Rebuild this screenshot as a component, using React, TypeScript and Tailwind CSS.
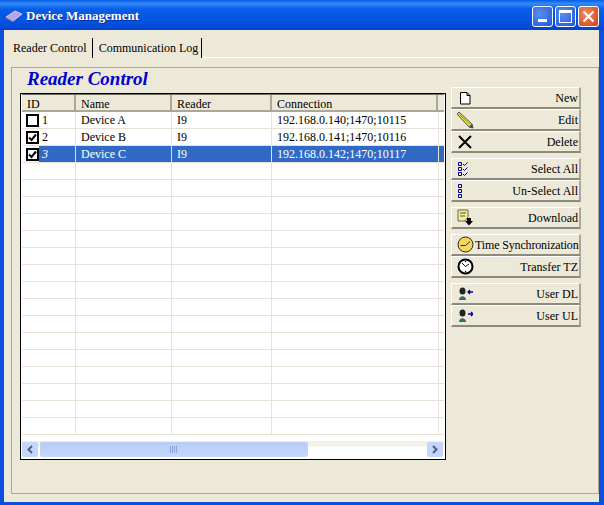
const F = "font-['Liberation_Serif',serif]";

const rows: { id: string; name: string; reader: string; conn: string; checked: boolean; sel?: boolean }[] = [
  { id: "1", name: "Device A", reader: "I9", conn: "192.168.0.140;1470;10115", checked: false },
  { id: "2", name: "Device B", reader: "I9", conn: "192.168.0.141;1470;10116", checked: true },
  { id: "3", name: "Device C", reader: "I9", conn: "192.168.0.142;1470;10117", checked: true, sel: true },
];

function Check({ on }: { on: boolean }) {
  return (
    <span className="flex h-[13px] w-[13px] shrink-0 items-center justify-center border-2 border-black bg-white">
      {on && (
        <svg width="9" height="9" viewBox="0 0 9 9">
          <path d="M1 4.5 L3.5 7 L8 1.5" fill="none" stroke="#000" strokeWidth="2" />
        </svg>
      )}
    </span>
  );
}

const icons: Record<string, React.ReactNode> = {
  new: (
    <svg width="14" height="14" viewBox="0 0 14 14">
      <path d="M2.5 1.5 H9 L12 4.5 V13 H2.5 Z M9 1.5 V4.5 H12" fill="#fff" stroke="#000" />
    </svg>
  ),
  edit: (
    <svg width="18" height="18" viewBox="0 0 18 18">
      <path d="M1 3 L3 1 L16 13 L17 17 L13 16 Z" fill="#e8e04a" stroke="#555" />
      <path d="M3 3 L14.5 14" stroke="#99912a" fill="none" />
      <path d="M13 16 L16 13 L17 17 Z" fill="#444" />
    </svg>
  ),
  del: (
    <svg width="14" height="14" viewBox="0 0 14 14">
      <path d="M1 1 L13 13 M13 1 L1 13" stroke="#000" strokeWidth="2" />
    </svg>
  ),
  all: (
    <svg width="10" height="14" viewBox="0 0 10 14">
      <path d="M.5 .5h3v3h-3zM.5 5.5h3v3h-3zM.5 10.5h3v3h-3z" fill="none" stroke="#000090" />
      <path d="M5 2 L6.5 3.5 L9.5 .5 M5 7 L6.5 8.5 L9.5 5.5 M5 12 L6.5 13.5 L9.5 10.5" fill="none" stroke="#000090" />
    </svg>
  ),
  none: (
    <svg width="5" height="14" viewBox="0 0 5 14">
      <path d="M.5 .5h3v3h-3zM.5 5.5h3v3h-3zM.5 10.5h3v3h-3z" fill="none" stroke="#000090" />
    </svg>
  ),
  dl: (
    <svg width="17" height="17" viewBox="0 0 17 17">
      <path d="M1 1 H11 V8 L8 12 H1 Z" fill="#f6ee8a" stroke="#666" />
      <path d="M3 4 H9 M3 7 H8" stroke="#555" />
      <path d="M10 9 H14 V12 H16 L12 16.5 L8 12 H10 Z" fill="#000" />
    </svg>
  ),
  time: (
    <svg width="17" height="17" viewBox="0 0 17 17">
      <circle cx="8.5" cy="8.5" r="7.5" fill="#f5d65a" stroke="#222" />
      <path d="M8.5 9.5 L13 5.5 M8.5 9.5 H3.5" stroke="#333" fill="none" />
    </svg>
  ),
  tz: (
    <svg width="17" height="17" viewBox="0 0 17 17">
      <circle cx="8.5" cy="8.5" r="7" fill="#fff" stroke="#000" strokeWidth="2" />
      <path d="M8.5 8.5 L5 5 M8.5 8.5 L12 6" stroke="#000" fill="none" />
      <circle cx="8.5" cy="3.5" r=".7" fill="#000" />
      <circle cx="8.5" cy="13.5" r=".7" fill="#000" />
    </svg>
  ),
  udl: (
    <svg width="15" height="13" viewBox="0 0 15 13">
      <ellipse cx="4.5" cy="4" rx="3" ry="3.5" fill="#222" />
      <path d="M1 13 C1 8 8 8 8 13 Z" fill="#2f6f6a" />
      <path d="M10 5 H15 M12 3 L10 5 L12 7" stroke="#0000a0" strokeWidth="1.3" fill="none" />
    </svg>
  ),
  uul: (
    <svg width="15" height="13" viewBox="0 0 15 13">
      <ellipse cx="4.5" cy="4" rx="3" ry="3.5" fill="#222" />
      <path d="M1 13 C1 8 8 8 8 13 Z" fill="#2f6f6a" />
      <path d="M10 5 H15 M13 3 L15 5 L13 7" stroke="#0000a0" strokeWidth="1.3" fill="none" />
    </svg>
  ),
};

function Btn({ icon, label, left, tight }: { icon: string; label: string; left?: boolean; tight?: boolean }) {
  return (
    <button className="flex h-[22px] w-[130px] items-center justify-between whitespace-nowrap border-t border-l border-t-white border-l-white border-r-2 border-b-2 border-r-[#aca899] border-b-[#8d8a7c] bg-[#ece9d8] pr-[1px] pl-[3px] text-[12px] text-black">
      <span className={`flex w-[20px] shrink-0 items-center ${left ? "justify-start pl-[3px]" : "justify-center"}`}>{icons[icon]}</span>
      <span className={tight ? "tracking-[-0.15px]" : ""}>{label}</span>
    </button>
  );
}

const cellLine = "shrink-0 border-r border-[#e6e3d6] pl-[5px] leading-[17px]";

function Row({ a, b, c, d, sel }: { a?: React.ReactNode; b?: string; c?: string; d?: string; sel?: boolean }) {
  const bg = sel ? "bg-[#316ac5] text-white" : "";
  return (
    <div className="flex h-[17px] w-[422px] border-b border-[#e6e3d6]">
      <div className="flex w-[54px] shrink-0 items-center border-r border-[#e6e3d6] pl-[4px]">{a}</div>
      <div className={`w-[96px] ${cellLine} ${bg}`}>{b}</div>
      <div className={`w-[100px] ${cellLine} ${bg}`}>{c}</div>
      <div className={`w-[167px] ${cellLine} ${bg}`}>{d}</div>
      <div className={`flex-1 ${bg}`} />
    </div>
  );
}

function Head({ w, t }: { w: string; t: string }) {
  return <div className={`${w} flex h-full shrink-0 items-center border-r-2 border-[#aca899] pt-[2px] pl-[5px]`}>{t}</div>;
}

function ScrollBtn({ d }: { d: string }) {
  return (
    <div className="flex h-[15px] w-[16px] shrink-0 items-center justify-center rounded-[2px] bg-[#c5d5fb]">
      <svg width="8" height="9" viewBox="0 0 8 9">
        <path d={d} fill="none" stroke="#4d6185" strokeWidth="2" />
      </svg>
    </div>
  );
}

export default function App() {
  const empty = Array.from({ length: 16 });
  return (
    <div className={`flex h-[505px] w-[604px] flex-col overflow-hidden bg-[#0a4fe0] ${F} text-[12px] text-black`}>
      <div className="flex h-[30px] shrink-0 items-center justify-between bg-[linear-gradient(180deg,#0a5ae8_0%,#2f8cf5_12%,#0a5ce8_30%,#0350e0_80%,#0342c8_100%)] pt-[2px] pr-[5px] pl-[5px]">
        <div className="flex items-center gap-[3px]">
          <svg width="18" height="14" viewBox="0 0 18 14">
            <path d="M1 8 L10 2 L17 5 L8 12 Z" fill="#b4a6e6" stroke="#e6e0fa" strokeWidth=".8" />
            <path d="M1 8 L8 12 V13.5 L1 9.5 Z" fill="#7c70b8" />
          </svg>
          <span className="text-[13px] font-bold text-white [text-shadow:1px_1px_0_#0a2f90]">Device Management</span>
        </div>
        <div className="flex gap-[2px]">
          <div className="flex h-[21px] w-[21px] items-end rounded-[3px] border border-white bg-[radial-gradient(circle_at_35%_35%,#5a90f5,#1f55d8)] pb-[4px] pl-[5px]">
            <div className="h-[3px] w-[9px] bg-white" />
          </div>
          <div className="flex h-[21px] w-[21px] items-center justify-center rounded-[3px] border border-white bg-[radial-gradient(circle_at_35%_35%,#5a90f5,#1f55d8)]">
            <div className="h-[13px] w-[13px] border border-t-[3px] border-white" />
          </div>
          <div className="flex h-[21px] w-[21px] items-center justify-center rounded-[3px] border border-white bg-[radial-gradient(circle_at_35%_35%,#ef8a60,#d0401c)]">
            <svg width="13" height="13" viewBox="0 0 13 13">
              <path d="M1.5 1.5 L11.5 11.5 M11.5 1.5 L1.5 11.5" stroke="#fff" strokeWidth="2.2" />
            </svg>
          </div>
        </div>
      </div>

      <div className="mr-[5px] mb-[3px] ml-[4px] flex flex-1 flex-col bg-[#ece9d8]">
        <div className="flex h-[28px] shrink-0 items-end pl-[9px]">
          <div className="flex h-[20px] items-center pr-[5px]">Reader Control</div>
          <div className="flex h-[20px] items-center border-x border-black pr-[3px] pl-[6px]">Communication Log</div>
          <div className="flex-1 border-b border-white" />
        </div>

        <div className="mt-[9px] mr-0 mb-[8px] ml-[7px] flex flex-1 flex-col border border-[#aca899] pl-[8px]">
          <div className="ml-[7px] h-[24px] text-[19px] leading-[22px] font-bold text-[#0000cc] italic">Reader Control</div>
          <div className="flex flex-1">
            <div className="mt-px flex h-[367px] w-[426px] shrink-0 flex-col overflow-hidden border border-black bg-white pr-px pb-px pl-px">
              <div className="h-px w-full shrink-0 bg-[#716f64]" />
              <div className="flex h-[17px] w-[422px] shrink-0 items-center border-b-2 border-[#aca899] bg-[#ece9d8]">
                <Head w="w-[54px]" t="ID" />
                <Head w="w-[96px]" t="Name" />
                <Head w="w-[100px]" t="Reader" />
                <Head w="w-[166px]" t="Connection" />
              </div>
              <div className="flex-1 overflow-hidden">
                {rows.map((r) => (
                  <Row
                    key={r.id}
                    sel={r.sel}
                    a={
                      <>
                        <Check on={r.checked} />
                        <span className={`flex h-full flex-1 items-center pl-[3px] ${r.sel ? "bg-[#316ac5] text-white italic" : ""}`}>{r.id}</span>
                      </>
                    }
                    b={r.name}
                    c={r.reader}
                    d={r.conn}
                  />
                ))}
                {empty.map((_, i) => (
                  <Row key={i} />
                ))}
              </div>
              <div className="flex h-[17px] w-[422px] shrink-0 items-center bg-[linear-gradient(180deg,#f0efe8_0%,#f3f2ec_30%,#ffffff_35%)] pr-px">
                <ScrollBtn d="M6 1 L2.5 4.5 L6 8" />
                <div className="ml-[2px] flex h-[15px] w-[268px] items-center justify-center rounded-[2px] bg-[linear-gradient(180deg,#b7cbf7,#c6d7fb)]">
                  <svg width="8" height="7" viewBox="0 0 8 7">
                    <path d="M.5 0V7M2.5 0V7M4.5 0V7M6.5 0V7" stroke="#8aa6dc" />
                  </svg>
                </div>
                <div className="flex-1" />
                <ScrollBtn d="M2 1 L5.5 4.5 L2 8" />
              </div>
            </div>
            <div className="-mt-[5px] ml-[5px] flex w-[130px] flex-col">
              <Btn icon="new" label="New" />
              <Btn icon="edit" label="Edit" />
              <Btn icon="del" label="Delete" />
              <div className="h-[5px]" />
              <Btn icon="all" label="Select All" left />
              <Btn icon="none" label="Un-Select All" left />
              <div className="h-[5px]" />
              <Btn icon="dl" label="Download" />
              <div className="h-[5px]" />
              <Btn icon="time" label="Time Synchronization" tight />
              <Btn icon="tz" label="Transfer TZ" />
              <div className="h-[5px]" />
              <Btn icon="udl" label="User DL" />
              <Btn icon="uul" label="User UL" />
            </div>
          </div>
        </div>
      </div>
    </div>
  );
}
